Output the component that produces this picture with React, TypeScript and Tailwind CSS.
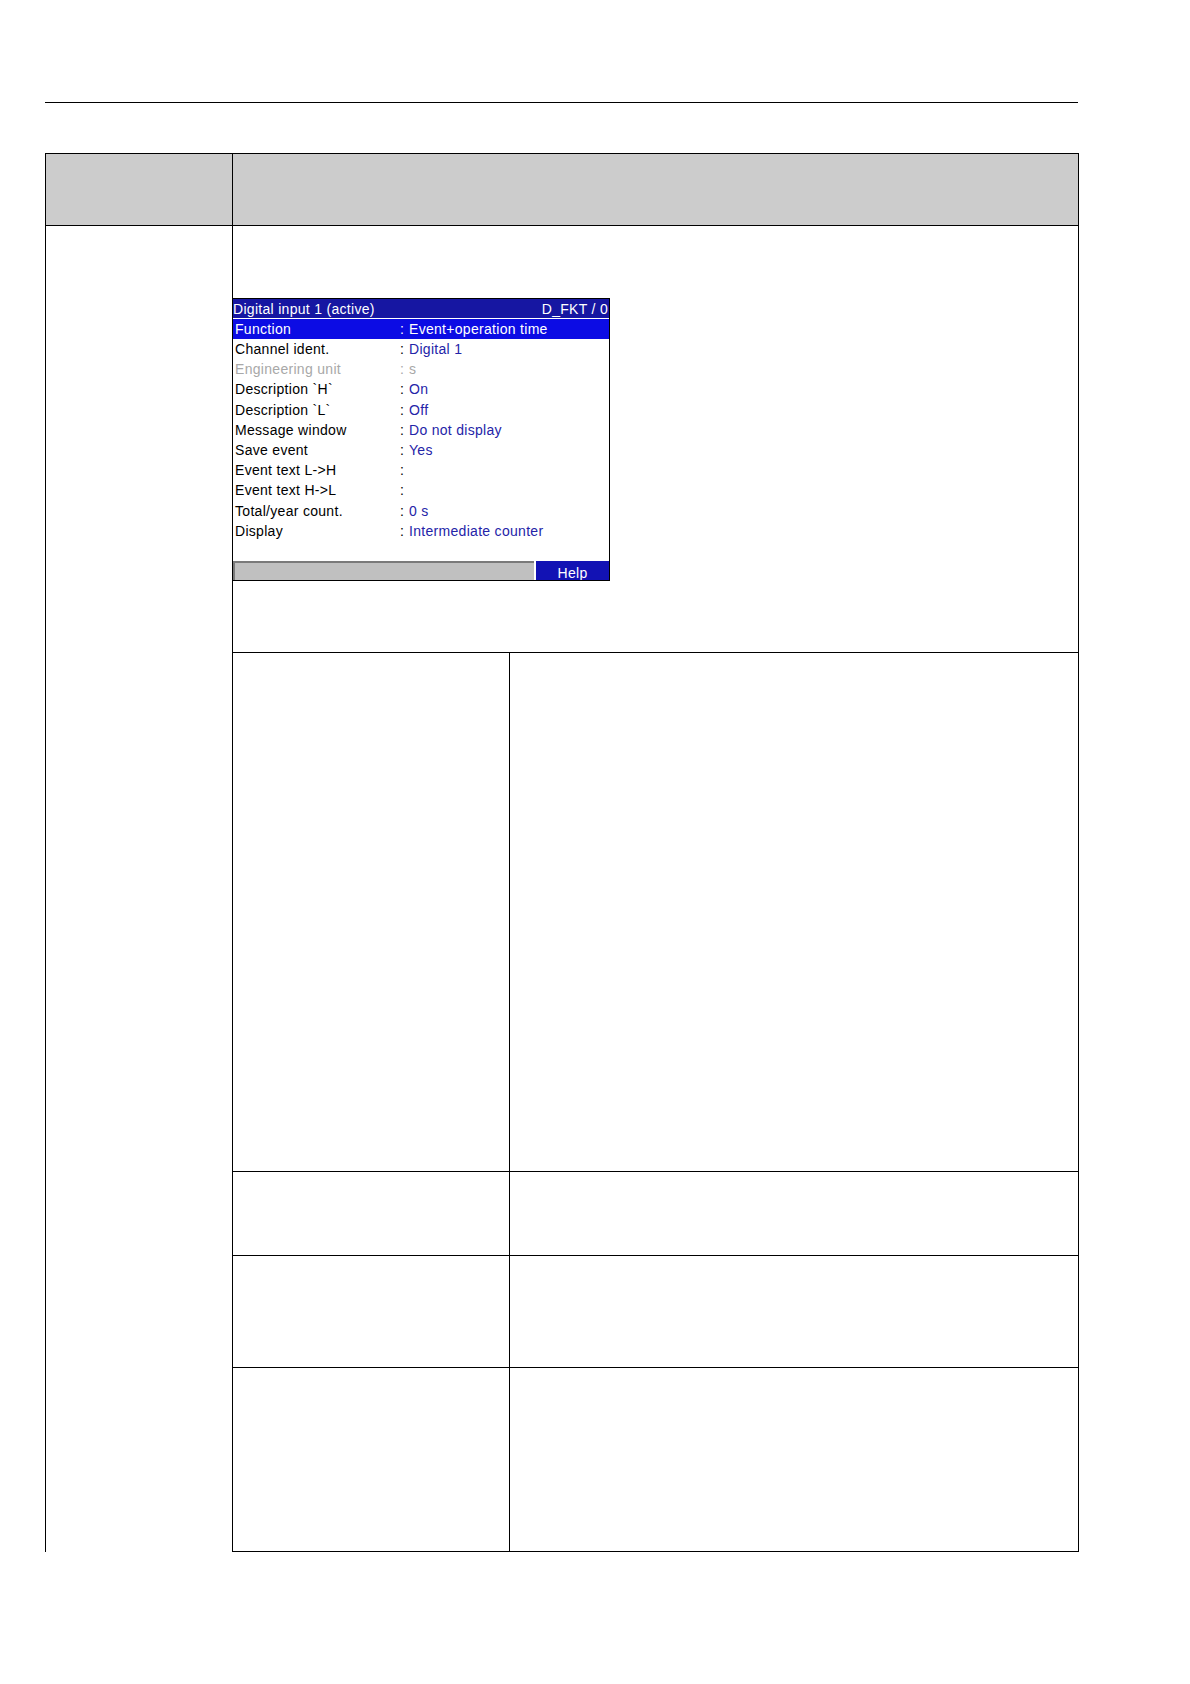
const rows: { label: string; value: string; dim?: boolean }[] = [
  { label: "Channel ident.", value: "Digital 1" },
  { label: "Engineering unit", value: "s", dim: true },
  { label: "Description `H`", value: "On" },
  { label: "Description `L`", value: "Off" },
  { label: "Message window", value: "Do not display" },
  { label: "Save event", value: "Yes" },
  { label: "Event text L->H", value: "" },
  { label: "Event text H->L", value: "" },
  { label: "Total/year count.", value: "0 s" },
  { label: "Display", value: "Intermediate counter" },
];

function DeviceScreen() {
  return (
    <div className="-ml-px w-[378px] h-[283px] border border-black flex flex-col bg-white text-[14px] tracking-[0.3px] leading-none">
      <div className="h-[19px] bg-[#1616a2] text-white flex items-center justify-between pr-[1px]">
        <span>Digital input 1 (active)</span>
        <span>D_FKT / 0</span>
      </div>
      <div className="h-[20px] mt-px bg-[#0c0ce4] text-white flex items-center pl-[2px]">
        <span className="w-[165px]">Function</span>
        <span className="w-[9px]">:</span>
        <span>Event+operation time</span>
      </div>
      {rows.map((r) => (
        <div key={r.label} className={"h-[20.2px] flex items-center pl-[2px] " + (r.dim ? "text-[#a8a8a8]" : "text-black")}>
          <span className="w-[165px]">{r.label}</span>
          <span className="w-[9px]">:</span>
          <span className={r.dim ? "text-[#a8a8a8]" : "text-[#2424a8]"}>{r.value}</span>
        </div>
      ))}
      <div className="flex-1" />
      <div className="h-[19px] flex">
        <div className="flex-1 bg-[#c0c0c0] border-t-2 border-l-2 border-[#7a7a7a]" />
        <div className="w-[73px] ml-[2px] bg-[#1212b4] text-white flex justify-center pt-[5px] overflow-hidden">
          Help
        </div>
      </div>
    </div>
  );
}

export default function App() {
  return (
    <div className="w-[1190px] h-[1684px] bg-white pt-[102px] font-['Liberation_Sans',Arial,sans-serif]">
      <div className="ml-[45px] w-[1033px] h-px bg-black" />

      <div className="ml-[45px] mt-[50px] w-[1034px] border-x border-t border-black">
        {/* header */}
        <div className="flex h-[72px] bg-[#cccccc] border-b border-black">
          <div className="w-[187px] border-r border-black" />
          <div className="flex-1" />
        </div>

        {/* body */}
        <div className="flex h-[1326px]">
          <div className="w-[187px] border-r border-black" />
          <div className="flex-1 flex flex-col pt-[72px]">
            <DeviceScreen />
            <div className="mt-[71px] flex flex-col">
              <div className="flex h-[519px] border-t border-black">
                <div className="w-[277px] border-r border-black" />
                <div className="flex-1" />
              </div>
              <div className="flex h-[84px] border-t border-black">
                <div className="w-[277px] border-r border-black" />
                <div className="flex-1" />
              </div>
              <div className="flex h-[112px] border-t border-black">
                <div className="w-[277px] border-r border-black" />
                <div className="flex-1" />
              </div>
              <div className="flex h-[185px] border-y border-black">
                <div className="w-[277px] border-r border-black" />
                <div className="flex-1" />
              </div>
            </div>
          </div>
        </div>
      </div>
    </div>
  );
}
